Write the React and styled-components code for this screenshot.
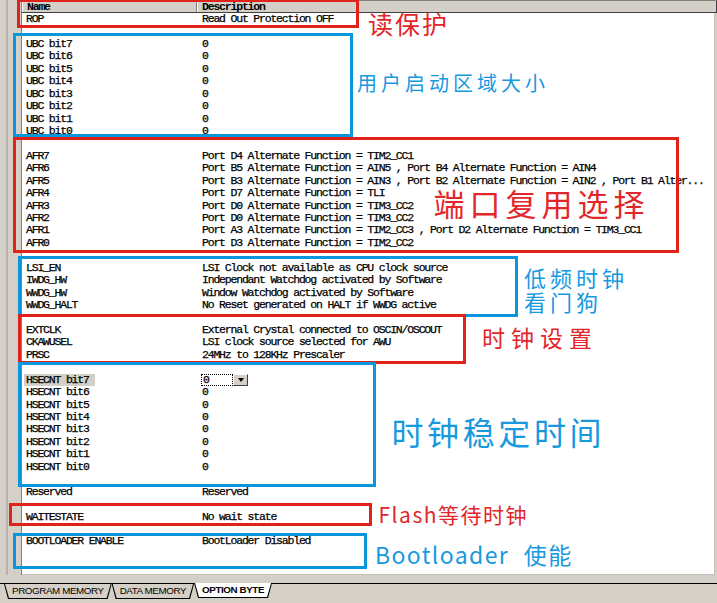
import React from 'react';
import styled, { createGlobalStyle } from 'styled-components';

const RED = '#e0221b';
const BLUE = '#0a96dc';
const RED_TEXT = '#e2262a';
const BLUE_TEXT = '#1799e0';
const FACE = '#d4d0c8';
const ROW_H = 12.45;

const Global = createGlobalStyle`
  html, body { margin: 0; padding: 0; background: ${FACE}; }
  body { width: 717px; height: 603px; overflow: hidden; }
`;

const Screen = styled.div`
  position: relative;
  width: 717px;
  height: 603px;
  background: ${FACE};
  display: grid;
  grid-template-rows: 575px 1fr;
  overflow: hidden;
`;

const Workspace = styled.div`
  display: grid;
  grid-template-columns: 21px 1fr;
  min-height: 0;
`;

const Gutter = styled.div`
  background: linear-gradient(to right, ${FACE} 0 6px, #b8b4ad 6px 8px, ${FACE} 8px);
`;

const ListView = styled.div`
  display: flex;
  flex-direction: column;
  border-left: 1px solid #808080;
  min-height: 0;
`;

const Header = styled.div`
  display: grid;
  grid-template-columns: 175px 1fr;
  height: 13px;
  box-sizing: border-box;
  border-top: 1px solid #808080;
  border-bottom: 1px solid #404040;
  background: ${FACE};
`;

const HeaderCell = styled.div`
  font: bold 11.5px/11px "Liberation Mono", monospace;
  letter-spacing: -1.2px;
  color: #000;
  padding-left: ${p => p.$pad}px;
  border-left: 1px solid #fff;
  border-right: 1px solid ${p => (p.$last ? '#404040' : '#808080')};
  white-space: nowrap;
  overflow: hidden;
`;

const Body = styled.div`
  flex: 1;
  background: #fff;
  margin-right: 2px;
  border-right: 1px solid #c4c1ba;
  border-bottom: 1px solid #c4c1ba;
`;

const Row = styled.div`
  display: grid;
  grid-template-columns: 175px 1fr;
  height: ${ROW_H}px;
  font: 11.5px/${ROW_H}px "Liberation Mono", monospace;
  letter-spacing: -1.2px;
  -webkit-text-stroke: 0.25px #000;
  color: #000;
  white-space: nowrap;
`;

const NameCell = styled.div`
  padding-left: 4px;
  height: 100%;
`;

const DescCell = styled.div`
  padding-left: 5px;
  height: 100%;
  display: flex;
  align-items: stretch;
`;

const Selected = styled.span`
  display: inline-block;
  height: ${ROW_H}px;
  background: ${FACE};
  margin-left: -2px;
  padding: 0 6px 0 2px;
`;

const Combo = styled.div`
  display: flex;
  margin-left: -1px;
  height: ${ROW_H}px;
`;

const ComboValue = styled.div`
  width: 32px;
  box-sizing: border-box;
  border: 1px dotted #000;
  padding-left: 1px;
  line-height: ${ROW_H - 2}px;
`;

const ComboButton = styled.div`
  width: 15px;
  box-sizing: border-box;
  background: ${FACE};
  border: 1px solid;
  border-color: #fff #404040 #404040 #fff;
  display: flex;
  align-items: center;
  justify-content: center;
`;

const Arrow = styled.span`
  width: 0;
  height: 0;
  border-left: 3.5px solid transparent;
  border-right: 3.5px solid transparent;
  border-top: 4px solid #000;
`;

const TabBar = styled.div`
  padding-top: 8px;
`;

const TabStrip = styled.div`
  display: flex;
  border-top: 1px solid #000;
  padding-left: 4px;
  height: 15px;
`;

const tabShape = 'polygon(0 0, 100% 0, calc(100% - 4px) 100%, 4px 100%)';

const Tab = styled.div`
  position: relative;
  height: 15px;
  padding: 0 8px;
  margin-top: ${p => (p.$active ? '-1px' : '0')};
  background: #000;
  clip-path: ${tabShape};
  font: ${p => (p.$active ? 'bold' : 'normal')} 9.8px/14px "Liberation Sans", Arial, sans-serif;
  letter-spacing: -0.4px;
  color: #000;
  white-space: nowrap;
  &::before {
    content: '';
    position: absolute;
    inset: 0 1px 1px 1px;
    background: ${p => (p.$active ? '#fff' : FACE)};
    clip-path: ${tabShape};
  }
`;

const TabLabel = styled.span`
  position: relative;
`;

const Mark = styled.div`
  position: absolute;
  box-sizing: border-box;
  left: ${p => p.$x}px;
  top: ${p => p.$y}px;
  width: ${p => p.$w}px;
  height: ${p => p.$h}px;
  border: 3px solid ${p => (p.$c === 'red' ? RED : BLUE)};
  pointer-events: none;
`;

const Note = styled.div`
  position: absolute;
  left: ${p => p.$x}px;
  top: ${p => p.$y}px;
  color: ${p => (p.$c === 'red' ? RED_TEXT : BLUE_TEXT)};
  font-family: "Noto Sans CJK SC", "Noto Sans", sans-serif;
  font-size: ${p => p.$size}px;
  letter-spacing: ${p => p.$ls}px;
  word-spacing: ${p => p.$ws || 0}px;
  line-height: ${p => p.$lh || 1};
  white-space: pre;
`;

const bits = (prefix) =>
  [7, 6, 5, 4, 3, 2, 1, 0].map(i => ({ name: `${prefix} bit${i}`, desc: '0' }));

const hse = bits('HSECNT');
hse[0] = { name: 'HSECNT bit7', desc: '0', selected: true };

const rows = [
  { name: 'ROP', desc: 'Read Out Protection OFF' },
  null,
  ...bits('UBC'),
  null,
  { name: 'AFR7', desc: 'Port D4 Alternate Function = TIM2_CC1' },
  { name: 'AFR6', desc: 'Port B5 Alternate Function = AIN5 , Port B4 Alternate Function = AIN4' },
  { name: 'AFR5', desc: 'Port B3 Alternate Function = AIN3 , Port B2 Alternate Function = AIN2 , Port B1 Alter...' },
  { name: 'AFR4', desc: 'Port D7 Alternate Function = TLI' },
  { name: 'AFR3', desc: 'Port D0 Alternate Function = TIM3_CC2' },
  { name: 'AFR2', desc: 'Port D0 Alternate Function = TIM3_CC2' },
  { name: 'AFR1', desc: 'Port A3 Alternate Function = TIM2_CC3 , Port D2 Alternate Function = TIM3_CC1' },
  { name: 'AFR0', desc: 'Port D3 Alternate Function = TIM2_CC2' },
  null,
  { name: 'LSI_EN', desc: 'LSI Clock not available as CPU clock source' },
  { name: 'IWDG_HW', desc: 'Independant Watchdog activated by Software' },
  { name: 'WWDG_HW', desc: 'Window Watchdog activated by Software' },
  { name: 'WWDG_HALT', desc: 'No Reset generated on HALT if WWDG active' },
  null,
  { name: 'EXTCLK', desc: 'External Crystal connected to OSCIN/OSCOUT' },
  { name: 'CKAWUSEL', desc: 'LSI clock source selected for AWU' },
  { name: 'PRSC', desc: '24MHz to 128KHz Prescaler' },
  null,
  ...hse,
  null,
  { name: 'Reserved', desc: 'Reserved' },
  null,
  { name: 'WAITESTATE', desc: 'No wait state' },
  null,
  { name: 'BOOTLOADER ENABLE', desc: 'BootLoader Disabled' },
];

const marks = [
  { c: 'red', x: 17, y: -1, w: 342, h: 29 },
  { c: 'blue', x: 13, y: 33, w: 340, h: 104 },
  { c: 'red', x: 13, y: 137, w: 666, h: 116 },
  { c: 'blue', x: 18, y: 256, w: 500, h: 61 },
  { c: 'red', x: 18, y: 314, w: 448, h: 50 },
  { c: 'blue', x: 18, y: 362, w: 358, h: 125 },
  { c: 'red', x: 9, y: 503, w: 363, h: 23 },
  { c: 'blue', x: 13, y: 533, w: 354, h: 36 },
];

const notes = [
  { c: 'red', x: 368, y: 10.5, size: 25, ls: 2, text: '读保护' },
  { c: 'blue', x: 357, y: 73, size: 20, ls: 4, text: '用户启动区域大小' },
  { c: 'red', x: 433.5, y: 187, size: 31, ls: 5, text: '端口复用选择' },
  { c: 'blue', x: 524, y: 265, size: 22, ls: 4, lh: '24px', text: '低频时钟\n看门狗' },
  { c: 'red', x: 482, y: 325.5, size: 23, ls: 6, text: '时钟设置' },
  { c: 'blue', x: 391.5, y: 415, size: 32, ls: 3.6, text: '时钟稳定时间' },
  { c: 'red', x: 378.5, y: 504, size: 21, ls: 1.5, text: 'Flash等待时钟' },
  { c: 'blue', x: 375, y: 542.5, size: 23, ls: 1.4, ws: 8, text: 'Bootloader 使能' },
];

const tabs = [
  { label: 'PROGRAM MEMORY' },
  { label: 'DATA MEMORY' },
  { label: 'OPTION BYTE', active: true },
];

export default function App() {
  return (
    <>
      <Global />
      <Screen>
        <Workspace>
          <Gutter />
          <ListView>
            <Header>
              <HeaderCell $pad={4}>Name</HeaderCell>
              <HeaderCell $pad={4} $last>Description</HeaderCell>
            </Header>
            <Body>
              {rows.map((r, i) =>
                r ? (
                  <Row key={i}>
                    <NameCell>{r.selected ? <Selected>{r.name}</Selected> : r.name}</NameCell>
                    <DescCell>
                      {r.selected ? (
                        <Combo>
                          <ComboValue>{r.desc}</ComboValue>
                          <ComboButton><Arrow /></ComboButton>
                        </Combo>
                      ) : (
                        r.desc
                      )}
                    </DescCell>
                  </Row>
                ) : (
                  <Row key={i} />
                )
              )}
            </Body>
          </ListView>
        </Workspace>
        <TabBar>
          <TabStrip>
            {tabs.map(t => (
              <Tab key={t.label} $active={t.active}>
                <TabLabel>{t.label}</TabLabel>
              </Tab>
            ))}
          </TabStrip>
        </TabBar>
        {marks.map((m, i) => (
          <Mark key={i} $c={m.c} $x={m.x} $y={m.y} $w={m.w} $h={m.h} />
        ))}
        {notes.map((n, i) => (
          <Note key={i} $c={n.c} $x={n.x} $y={n.y} $size={n.size} $ls={n.ls} $ws={n.ws} $lh={n.lh}>
            {n.text}
          </Note>
        ))}
      </Screen>
    </>
  );
}
